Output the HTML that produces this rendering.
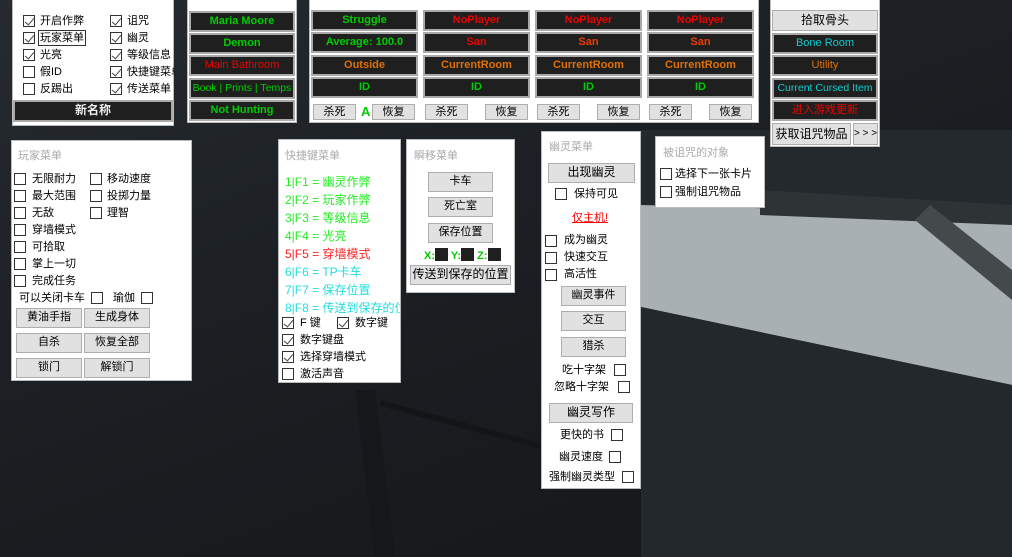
<!DOCTYPE html>
<html><head><meta charset="utf-8"><style>
*{margin:0;padding:0;box-sizing:border-box}
body{width:1012px;height:557px;overflow:hidden;position:relative;font-family:"Liberation Sans","Noto Sans CJK SC",sans-serif;font-size:11px;color:#000;
background:linear-gradient(160deg,#262b30 0%,#1c2024 40%,#181b1e 70%,#15181a 100%)}
.a{position:absolute}
.p{position:absolute;background:#fff;border:1px solid #bbb}
.t{position:absolute;color:#aaa;font-size:11px}
.cb{position:absolute;width:12px;height:12px;border:1px solid #333;background:#fff}
.cb.c::after{content:"";position:absolute;left:3px;top:0px;width:4px;height:8px;border:solid #444;border-width:0 1.5px 1.5px 0;transform:rotate(40deg)}
.l{position:absolute;white-space:nowrap;line-height:14px}
.d{position:absolute;background:#1f1f1f;border:2px solid #a9a9a9;color:#0c0;font-weight:bold;font-size:11px;text-align:center;line-height:16px;white-space:nowrap;overflow:hidden}
.b{position:absolute;background:#e1e1e1;border:1px solid #adadad;text-align:center;white-space:nowrap;line-height:17px}
.r{color:#e00}.o{color:#e07000}.cy{color:#1cc}.g{color:#0c0}.sr{color:#e84000}
.hk{position:absolute;left:6px;font-size:12px;white-space:nowrap}
</style></head><body>
<svg class="a" style="left:0;top:0" width="1012" height="557">
<polygon points="641,203 1012,210 1012,385 641,307" fill="#a9b0b4"/>
<polygon points="641,307 1012,385 1012,557 641,557" fill="#22282c"/>
<polygon points="641,130 1012,130 1012,215 641,205" fill="#23292d"/>
<polygon points="760,190 1012,205 1012,225 760,215" fill="#2e3336"/>
<polygon points="930,205 1012,270 1012,300 915,220" fill="#44494b"/>
<polygon points="355,390 375,390 395,557 375,557" fill="#15181a"/>
<polygon points="380,400 640,470 640,476 380,406" fill="#131517"/>
</svg>

<div class="p" style="left:12px;top:-2px;width:162px;height:128px">
 <div class="cb c" style="left:10px;top:16px"></div><div class="l" style="left:27px;top:15px">开启作弊</div>
 <div class="cb c" style="left:10px;top:33px"></div><div class="l" style="left:25px;top:31px;border:1px solid #333;padding:0 1px">玩家菜单</div>
 <div class="cb c" style="left:10px;top:50px"></div><div class="l" style="left:27px;top:49px">光亮</div>
 <div class="cb" style="left:10px;top:67px"></div><div class="l" style="left:27px;top:66px">假ID</div>
 <div class="cb" style="left:10px;top:84px"></div><div class="l" style="left:27px;top:83px">反踢出</div>
 <div class="cb c" style="left:97px;top:16px"></div><div class="l" style="left:114px;top:15px">诅咒</div>
 <div class="cb c" style="left:97px;top:33px"></div><div class="l" style="left:114px;top:32px">幽灵</div>
 <div class="cb c" style="left:97px;top:50px"></div><div class="l" style="left:114px;top:49px">等级信息</div>
 <div class="cb c" style="left:97px;top:67px"></div><div class="l" style="left:114px;top:66px;width:47px;overflow:hidden">快捷键菜单</div>
 <div class="cb c" style="left:97px;top:84px"></div><div class="l" style="left:114px;top:83px">传送菜单</div>
 <div class="d" style="left:0px;top:101px;width:160px;height:22px;color:#eee;font-size:12px">新名称</div>
</div>

<div class="p" style="left:187px;top:-2px;width:110px;height:125px">
 <div class="d" style="left:1px;top:12px;width:106px;height:21px">Maria Moore</div>
 <div class="d" style="left:1px;top:34px;width:106px;height:21px">Demon</div>
 <div class="d r" style="left:1px;top:56px;width:106px;height:21px;font-weight:normal">Main Bathroom</div>
 <div class="d" style="left:1px;top:79px;width:106px;height:21px;font-size:10.5px;font-weight:normal">Book | Prints | Temps</div>
 <div class="d" style="left:1px;top:101px;width:106px;height:21px">Not Hunting</div>
</div>

<div class="p" style="left:309px;top:-2px;width:450px;height:125px">
 <div class="d" style="left:1px;top:11px;width:107px;height:21px">Struggle</div>
 <div class="d" style="left:1px;top:33px;width:107px;height:21px">Average: 100.0</div>
 <div class="d o" style="left:1px;top:56px;width:107px;height:21px">Outside</div>
 <div class="d" style="left:1px;top:78px;width:107px;height:21px">ID</div>
 <div class="b" style="left:3px;top:105px;width:43px;height:16px;line-height:14px">杀死</div>
 <div class="l g" style="left:51px;top:106px;font-weight:bold;font-size:13px">A</div>
 <div class="b" style="left:62px;top:105px;width:43px;height:16px;line-height:14px">恢复</div>

 <div class="d r" style="left:113px;top:11px;width:107px;height:21px">NoPlayer</div>
 <div class="d r" style="left:113px;top:33px;width:107px;height:21px">San</div>
 <div class="d o" style="left:113px;top:56px;width:107px;height:21px">CurrentRoom</div>
 <div class="d" style="left:113px;top:78px;width:107px;height:21px">ID</div>
 <div class="b" style="left:115px;top:105px;width:43px;height:16px;line-height:14px">杀死</div>
 <div class="b" style="left:175px;top:105px;width:43px;height:16px;line-height:14px">恢复</div>

 <div class="d r" style="left:225px;top:11px;width:107px;height:21px">NoPlayer</div>
 <div class="d sr" style="left:225px;top:33px;width:107px;height:21px">San</div>
 <div class="d o" style="left:225px;top:56px;width:107px;height:21px">CurrentRoom</div>
 <div class="d" style="left:225px;top:78px;width:107px;height:21px">ID</div>
 <div class="b" style="left:227px;top:105px;width:43px;height:16px;line-height:14px">杀死</div>
 <div class="b" style="left:287px;top:105px;width:43px;height:16px;line-height:14px">恢复</div>

 <div class="d r" style="left:337px;top:11px;width:107px;height:21px">NoPlayer</div>
 <div class="d sr" style="left:337px;top:33px;width:107px;height:21px">San</div>
 <div class="d o" style="left:337px;top:56px;width:107px;height:21px">CurrentRoom</div>
 <div class="d" style="left:337px;top:78px;width:107px;height:21px">ID</div>
 <div class="b" style="left:339px;top:105px;width:43px;height:16px;line-height:14px">杀死</div>
 <div class="b" style="left:399px;top:105px;width:43px;height:16px;line-height:14px">恢复</div>
</div>

<div class="p" style="left:770px;top:-2px;width:110px;height:149px">
 <div class="b" style="left:1px;top:11px;width:106px;height:21px;line-height:19px;font-size:12px">拾取骨头</div>
 <div class="d cy" style="left:1px;top:34px;width:106px;height:21px;font-weight:normal">Bone Room</div>
 <div class="d o" style="left:1px;top:56px;width:106px;height:21px;font-weight:normal">Utility</div>
 <div class="d cy" style="left:1px;top:79px;width:106px;height:21px;font-weight:normal;font-size:10.5px">Current Cursed Item</div>
 <div class="d r" style="left:1px;top:101px;width:106px;height:21px;font-weight:normal">进入游戏更新</div>
 <div class="b" style="left:1px;top:124px;width:79px;height:22px;line-height:20px;font-size:12px">获取诅咒物品</div>
 <div class="b" style="left:82px;top:124px;width:25px;height:22px;line-height:20px;font-size:10px">&gt; &gt; &gt;</div>
</div>

<div class="p" style="left:11px;top:140px;width:181px;height:241px">
 <div class="t" style="left:6px;top:6px">玩家菜单</div>
 <div class="cb" style="left:2px;top:32px"></div><div class="l" style="left:20px;top:31px">无限耐力</div>
 <div class="cb" style="left:2px;top:49px"></div><div class="l" style="left:20px;top:48px">最大范围</div>
 <div class="cb" style="left:2px;top:66px"></div><div class="l" style="left:20px;top:65px">无敌</div>
 <div class="cb" style="left:2px;top:83px"></div><div class="l" style="left:20px;top:82px">穿墙模式</div>
 <div class="cb" style="left:2px;top:100px"></div><div class="l" style="left:20px;top:99px">可拾取</div>
 <div class="cb" style="left:2px;top:117px"></div><div class="l" style="left:20px;top:116px">掌上一切</div>
 <div class="cb" style="left:2px;top:134px"></div><div class="l" style="left:20px;top:133px">完成任务</div>
 <div class="cb" style="left:78px;top:32px"></div><div class="l" style="left:95px;top:31px">移动速度</div>
 <div class="cb" style="left:78px;top:49px"></div><div class="l" style="left:95px;top:48px">投掷力量</div>
 <div class="cb" style="left:78px;top:66px"></div><div class="l" style="left:95px;top:65px">理智</div>
 <div class="l" style="left:7px;top:150px">可以关闭卡车</div><div class="cb" style="left:79px;top:151px"></div>
 <div class="l" style="left:101px;top:150px">瑜伽</div><div class="cb" style="left:129px;top:151px"></div>
 <div class="b" style="left:4px;top:167px;width:66px;height:20px">黄油手指</div>
 <div class="b" style="left:72px;top:167px;width:66px;height:20px">生成身体</div>
 <div class="b" style="left:4px;top:192px;width:66px;height:20px">自杀</div>
 <div class="b" style="left:72px;top:192px;width:66px;height:20px">恢复全部</div>
 <div class="b" style="left:4px;top:217px;width:66px;height:20px">锁门</div>
 <div class="b" style="left:72px;top:217px;width:66px;height:20px">解锁门</div>
</div>

<div class="p" style="left:278px;top:139px;width:123px;height:244px;overflow:hidden">
 <div class="t" style="left:6px;top:7px">快捷键菜单</div>
 <div class="hk" style="top:33px;color:#2e2">1|F1 = 幽灵作弊</div>
 <div class="hk" style="top:51px;color:#2e2">2|F2 = 玩家作弊</div>
 <div class="hk" style="top:69px;color:#2e2">3|F3 = 等级信息</div>
 <div class="hk" style="top:87px;color:#2e2">4|F4 = 光亮</div>
 <div class="hk" style="top:105px;color:#f22">5|F5 = 穿墙模式</div>
 <div class="hk" style="top:123px;color:#2dd">6|F6 = TP卡车</div>
 <div class="hk" style="top:141px;color:#2dd">7|F7 = 保存位置</div>
 <div class="hk" style="top:159px;color:#2dd">8|F8 = 传送到保存的位置</div>
 <div class="cb c" style="left:3px;top:177px"></div><div class="l" style="left:21px;top:176px">F 键</div>
 <div class="cb c" style="left:58px;top:177px"></div><div class="l" style="left:76px;top:176px">数字键</div>
 <div class="cb c" style="left:3px;top:194px"></div><div class="l" style="left:21px;top:193px">数字键盘</div>
 <div class="cb c" style="left:3px;top:211px"></div><div class="l" style="left:21px;top:210px">选择穿墙模式</div>
 <div class="cb" style="left:3px;top:228px"></div><div class="l" style="left:21px;top:227px">激活声音</div>
</div>

<div class="p" style="left:406px;top:139px;width:109px;height:154px">
 <div class="t" style="left:7px;top:7px">瞬移菜单</div>
 <div class="b" style="left:21px;top:32px;width:65px;height:20px">卡车</div>
 <div class="b" style="left:21px;top:57px;width:65px;height:20px">死亡室</div>
 <div class="b" style="left:21px;top:83px;width:65px;height:20px">保存位置</div>
 <div class="l g" style="left:17px;top:108px;font-weight:bold">X:<span style="display:inline-block;width:13px;height:13px;background:#1f1f1f;vertical-align:-2px"></span> Y:<span style="display:inline-block;width:13px;height:13px;background:#1f1f1f;vertical-align:-2px"></span> Z:<span style="display:inline-block;width:13px;height:13px;background:#1f1f1f;vertical-align:-2px"></span></div>
 <div class="b" style="left:3px;top:125px;width:101px;height:20px;font-size:12px">传送到保存的位置</div>
</div>

<div class="p" style="left:541px;top:131px;width:100px;height:358px">
 <div class="t" style="left:7px;top:6px">幽灵菜单</div>
 <div class="b" style="left:6px;top:31px;width:87px;height:20px;font-size:12px">出现幽灵</div>
 <div class="cb" style="left:13px;top:56px"></div><div class="l" style="left:32px;top:55px">保持可见</div>
 <div class="l" style="left:30px;top:79px;color:#f00;text-decoration:underline">仅主机!</div>
 <div class="cb" style="left:3px;top:103px"></div><div class="l" style="left:22px;top:101px">成为幽灵</div>
 <div class="cb" style="left:3px;top:120px"></div><div class="l" style="left:22px;top:118px">快速交互</div>
 <div class="cb" style="left:3px;top:137px"></div><div class="l" style="left:22px;top:135px">高活性</div>
 <div class="b" style="left:19px;top:154px;width:65px;height:20px">幽灵事件</div>
 <div class="b" style="left:19px;top:179px;width:65px;height:20px">交互</div>
 <div class="b" style="left:19px;top:205px;width:65px;height:20px">猎杀</div>
 <div class="l" style="left:20px;top:231px">吃十字架</div><div class="cb" style="left:72px;top:232px"></div>
 <div class="l" style="left:12px;top:248px">忽略十字架</div><div class="cb" style="left:76px;top:249px"></div>
 <div class="b" style="left:7px;top:271px;width:84px;height:20px;font-size:12px">幽灵写作</div>
 <div class="l" style="left:18px;top:296px">更快的书</div><div class="cb" style="left:69px;top:297px"></div>
 <div class="l" style="left:17px;top:318px">幽灵速度</div><div class="cb" style="left:67px;top:319px"></div>
 <div class="l" style="left:7px;top:338px">强制幽灵类型</div><div class="cb" style="left:80px;top:339px"></div>
</div>

<div class="p" style="left:655px;top:136px;width:110px;height:72px">
 <div class="t" style="left:7px;top:7px">被诅咒的对象</div>
 <div class="cb" style="left:4px;top:31px"></div><div class="l" style="left:19px;top:30px">选择下一张卡片</div>
 <div class="cb" style="left:4px;top:49px"></div><div class="l" style="left:19px;top:48px">强制诅咒物品</div>
</div>
</body></html>
